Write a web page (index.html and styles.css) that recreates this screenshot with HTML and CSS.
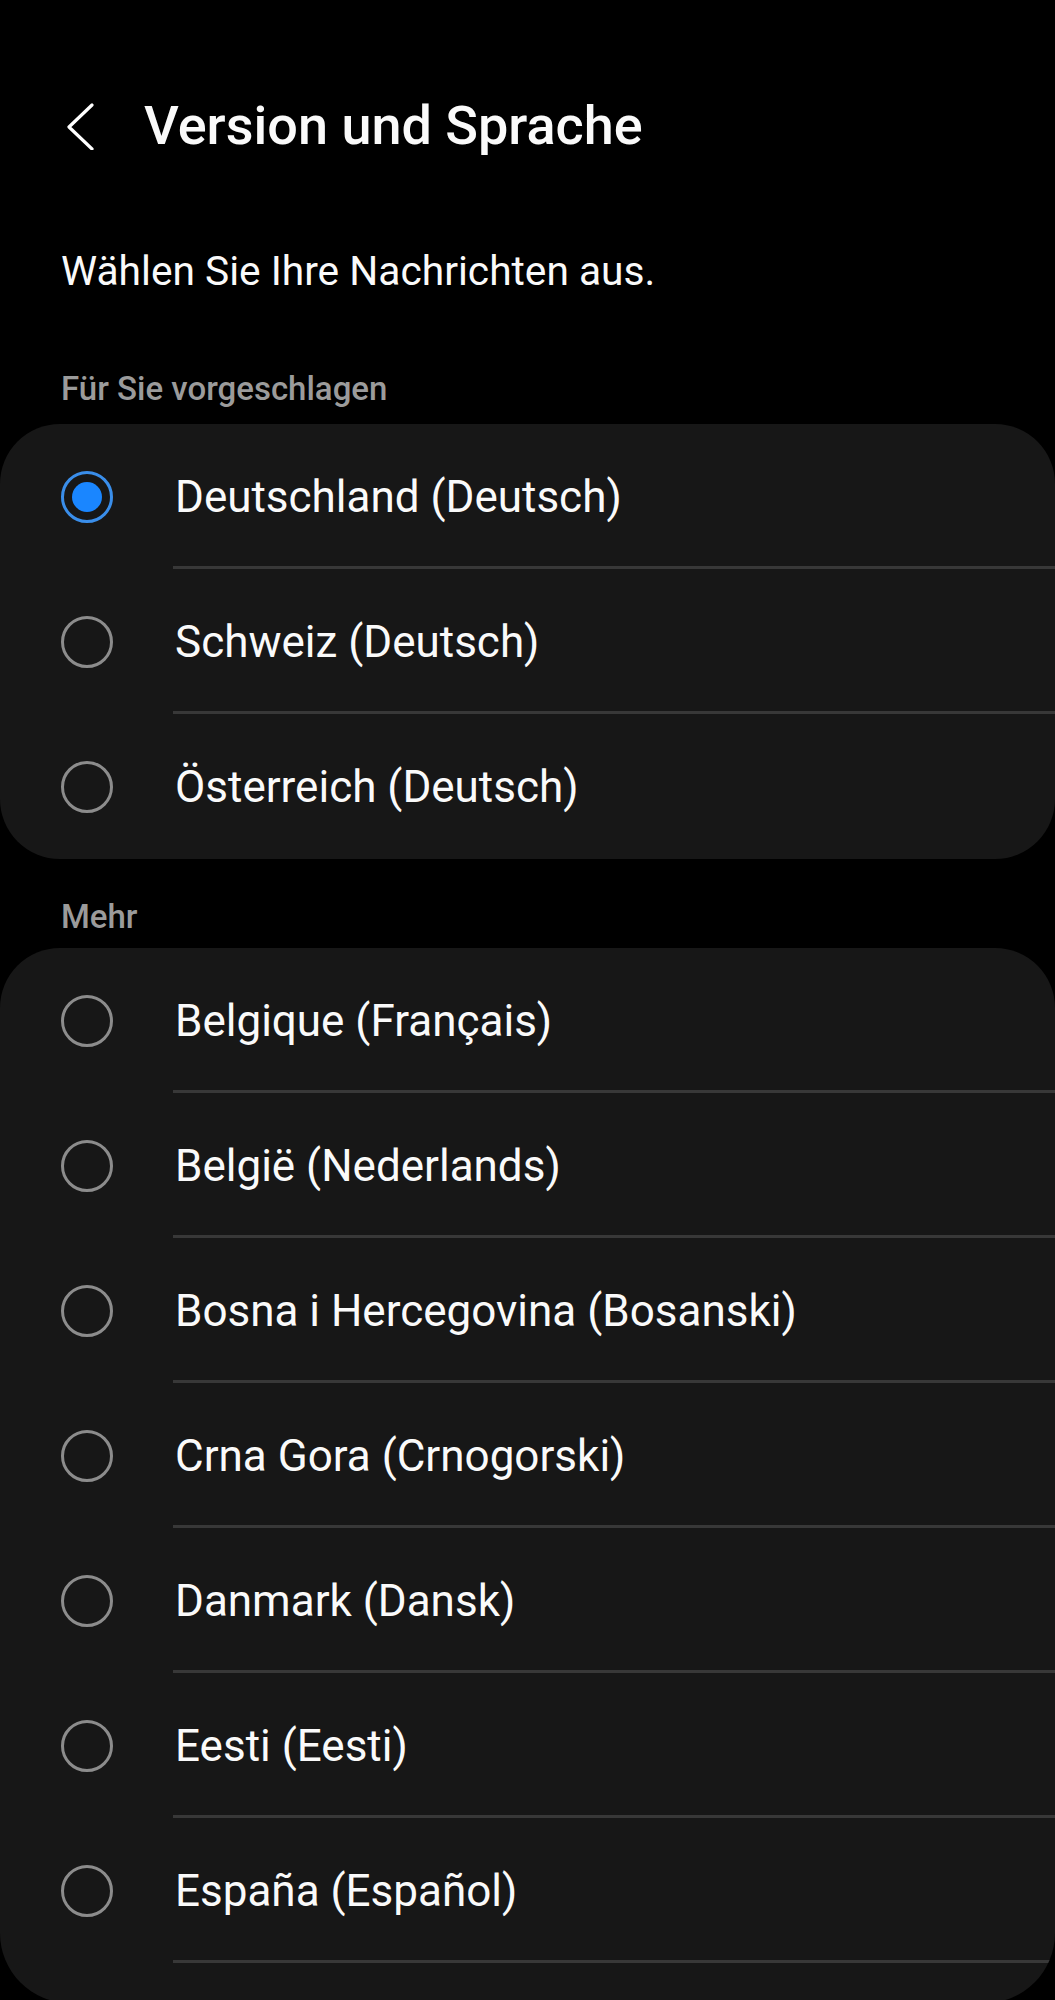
FILE: index.html
```html
<!DOCTYPE html>
<html lang="de">
<head>
<meta charset="utf-8">
<title>Version und Sprache</title>
<link rel="stylesheet" href="styles.css">
</head>
<body>
<div class="screen">
  <header class="topbar">
    <span class="back">
      <svg width="30" height="48" viewBox="0 0 30 48"><polyline points="26,3 3,25 26,47" fill="none" stroke="#ffffff" stroke-width="3.2" stroke-linecap="round" stroke-linejoin="round"/></svg>
    </span>
    <h1 class="title">Version und Sprache</h1>
  </header>

  <p class="intro">Wählen Sie Ihre Nachrichten aus.</p>

  <div class="section-label label-first">Für Sie vorgeschlagen</div>
  <div class="card">
    <div class="row"><span class="radio-col"><span class="radio checked"></span></span><span class="label">Deutschland (Deutsch)</span></div>
    <div class="row"><span class="radio-col"><span class="radio"></span></span><span class="label">Schweiz (Deutsch)</span></div>
    <div class="row last"><span class="radio-col"><span class="radio"></span></span><span class="label">Österreich (Deutsch)</span></div>
  </div>

  <div class="section-label label-second">Mehr</div>
  <div class="card card-more">
    <div class="row"><span class="radio-col"><span class="radio"></span></span><span class="label">Belgique (Français)</span></div>
    <div class="row"><span class="radio-col"><span class="radio"></span></span><span class="label">België (Nederlands)</span></div>
    <div class="row"><span class="radio-col"><span class="radio"></span></span><span class="label">Bosna i Hercegovina (Bosanski)</span></div>
    <div class="row"><span class="radio-col"><span class="radio"></span></span><span class="label">Crna Gora (Crnogorski)</span></div>
    <div class="row"><span class="radio-col"><span class="radio"></span></span><span class="label">Danmark (Dansk)</span></div>
    <div class="row"><span class="radio-col"><span class="radio"></span></span><span class="label">Eesti (Eesti)</span></div>
    <div class="row"><span class="radio-col"><span class="radio"></span></span><span class="label">España (Español)</span></div>
  </div>
</div>
</body>
</html>
```
FILE: styles.css
```css
html, body {
  margin: 0;
  padding: 0;
  background: #000000;
}
body {
  font-family: Roboto, "Noto Sans", "Liberation Sans", sans-serif;
  color: #fafafa;
  height: 2000px;
  overflow: hidden;
}
.screen {
  display: flex;
  flex-direction: column;
}
.topbar {
  margin-top: 76px;
  height: 100px;
  display: flex;
  align-items: center;
  padding-left: 66px;
}
.back {
  width: 78px;
  height: 48px;
  display: flex;
  align-items: center;
}
.back svg { display: block; }
.title {
  margin: 0;
  font-size: 54px;
  font-weight: 500;
  line-height: 62px;
  letter-spacing: 0;
}
.intro {
  margin: 70px 0 0 61px;
  font-size: 40.7px;
  line-height: 50px;
  font-weight: 400;
}
.section-label {
  margin-left: 61px;
  font-size: 33px;
  line-height: 40px;
  font-weight: 500;
  color: #9b9b9b;
}
.label-first { margin-top: 73px; }
.label-second { margin-top: 38px; }
.card {
  background: #171717;
  border-radius: 60px;
  overflow: hidden;
  margin-top: 15px;
}
.card-more {
  margin-top: 11px;
  padding-bottom: 40px;
  border-radius: 60px 60px 70px 70px;
}
.row {
  display: flex;
  height: 145px;
}
.radio-col {
  width: 173px;
  flex: none;
  display: flex;
  align-items: center;
  padding-left: 61px;
  box-sizing: border-box;
}
.radio {
  width: 52px;
  height: 52px;
  box-sizing: border-box;
  border: 3px solid #8c8c8c;
  border-radius: 50%;
  display: block;
  position: relative;
}
.radio.checked {
  border-color: #3a8eea;
}
.radio.checked::after {
  content: "";
  position: absolute;
  left: 8px;
  top: 8px;
  width: 30px;
  height: 30px;
  border-radius: 50%;
  background: #1a86ff;
}
.label {
  flex: 1;
  display: flex;
  align-items: center;
  padding-left: 2px;
  font-size: 44px;
  line-height: 50px;
  border-bottom: 3px solid #383838;
  padding-top: 3px;
}
.row.last .label {
  border-bottom: none;
  padding-top: 0;
}
```
